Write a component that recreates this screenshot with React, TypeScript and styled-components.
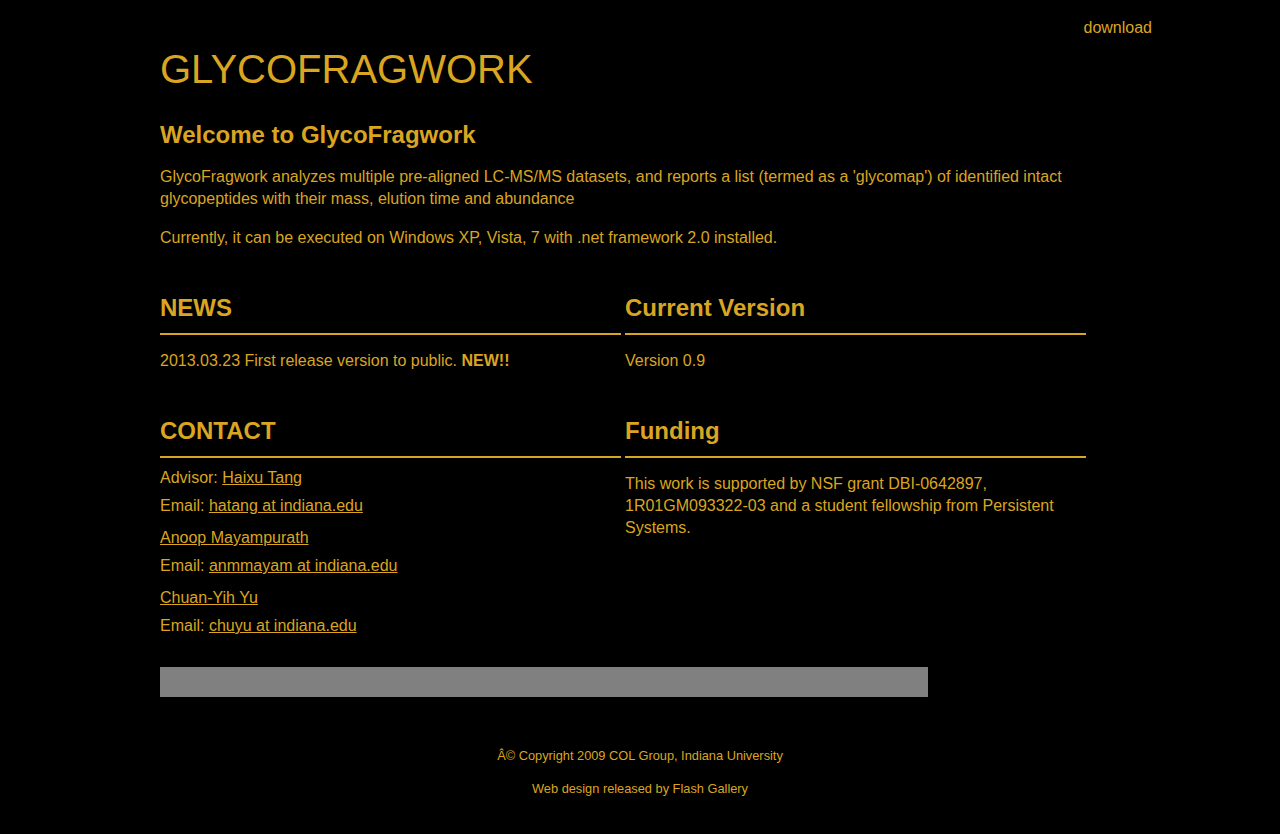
import React from 'react';
import styled, { createGlobalStyle } from 'styled-components';

const GOLD = '#daa520';

const GlobalStyle = createGlobalStyle`
  html, body {
    margin: 0;
    padding: 0;
    background: #000;
  }
  body {
    font-family: "Liberation Sans", Arial, Helvetica, sans-serif;
    color: ${GOLD};
  }
`;

const TopBar = styled.div`
  width: 1024px;
  margin: 0 auto;
  padding-top: 19px;
  text-align: right;
  font-size: 16px;
  line-height: 18px;
`;

const PlainLink = styled.a`
  color: ${GOLD};
  text-decoration: none;
`;

const Wrapper = styled.div`
  width: 960px;
  margin: 0 auto;
`;

const Title = styled.h1`
  margin: 8px 0 0;
  font-size: 40px;
  line-height: 48px;
  font-weight: normal;
`;

const Welcome = styled.h2`
  margin: 28px 0 0;
  font-size: 24px;
  line-height: 28px;
  font-weight: bold;
`;

const Para = styled.p`
  margin: 17px 0 0;
  width: 926px;
  font-size: 16px;
  line-height: 22px;
`;

const Columns = styled.div<{ $top: number }>`
  display: grid;
  grid-template-columns: 461px 461px;
  column-gap: 4px;
  margin-top: ${(p) => p.$top}px;
  width: 926px;
`;

const Section = styled.section``;

const SectionTitle = styled.h3`
  margin: 0;
  padding-bottom: 11px;
  border-bottom: 2px solid ${GOLD};
  font-size: 24px;
  line-height: 28px;
  font-weight: bold;
`;

const Body = styled.div`
  margin-top: 15px;
  font-size: 16px;
  line-height: 22px;
`;

const ContactList = styled.div`
  margin-top: 6px;
  display: flex;
  flex-direction: column;
  gap: 4px;
`;

const ContactGroup = styled.div`
  font-size: 16px;
  line-height: 28px;
`;

const Line = styled.div``;

const Link = styled.a`
  color: ${GOLD};
  text-decoration: underline;
`;

const GreyBar = styled.div`
  margin-top: 27px;
  width: 768px;
  height: 30px;
  background: #808080;
`;

const Footer = styled.footer`
  margin-top: 52px;
  padding-bottom: 40px;
  text-align: center;
  font-size: 12.8px;
  line-height: 14px;
  display: flex;
  flex-direction: column;
  gap: 19px;
`;

const contacts = [
  { label: 'Advisor: ', name: 'Haixu Tang', email: 'hatang at indiana.edu' },
  { label: '', name: 'Anoop Mayampurath', email: 'anmmayam at indiana.edu' },
  { label: '', name: 'Chuan-Yih Yu', email: 'chuyu at indiana.edu' },
];

const App: React.FC = () => {
  return (
    <>
      <GlobalStyle />
      <TopBar>
        <PlainLink href="#">download</PlainLink>
      </TopBar>
      <Wrapper>
        <Title>GLYCOFRAGWORK</Title>
        <Welcome>Welcome to GlycoFragwork</Welcome>
        <Para>
          GlycoFragwork analyzes multiple pre-aligned LC-MS/MS datasets, and reports a list (termed as a
          'glycomap') of identified intact glycopeptides with their mass, elution time and abundance
        </Para>
        <Para>Currently, it can be executed on Windows XP, Vista, 7 with .net framework 2.0 installed.</Para>

        <Columns $top={45}>
          <Section>
            <SectionTitle>NEWS</SectionTitle>
            <Body>
              2013.03.23 First release version to public. <b>NEW!!</b>
            </Body>
          </Section>
          <Section>
            <SectionTitle>Current Version</SectionTitle>
            <Body>Version 0.9</Body>
          </Section>
        </Columns>

        <Columns $top={45}>
          <Section>
            <SectionTitle>CONTACT</SectionTitle>
            <ContactList>
              {contacts.map((c) => (
                <ContactGroup key={c.name}>
                  <Line>
                    {c.label}
                    <Link href="#">{c.name}</Link>
                  </Line>
                  <Line>
                    Email: <Link href="#">{c.email}</Link>
                  </Line>
                </ContactGroup>
              ))}
            </ContactList>
          </Section>
          <Section>
            <SectionTitle>Funding</SectionTitle>
            <Body>
              This work is supported by NSF grant DBI-0642897, 1R01GM093322-03 and a student fellowship from
              Persistent Systems.
            </Body>
          </Section>
        </Columns>

        <GreyBar />
      </Wrapper>
      <Footer>
        <div>Â© Copyright 2009 COL Group, Indiana University</div>
        <div>Web design released by Flash Gallery</div>
      </Footer>
    </>
  );
};

export default App;
